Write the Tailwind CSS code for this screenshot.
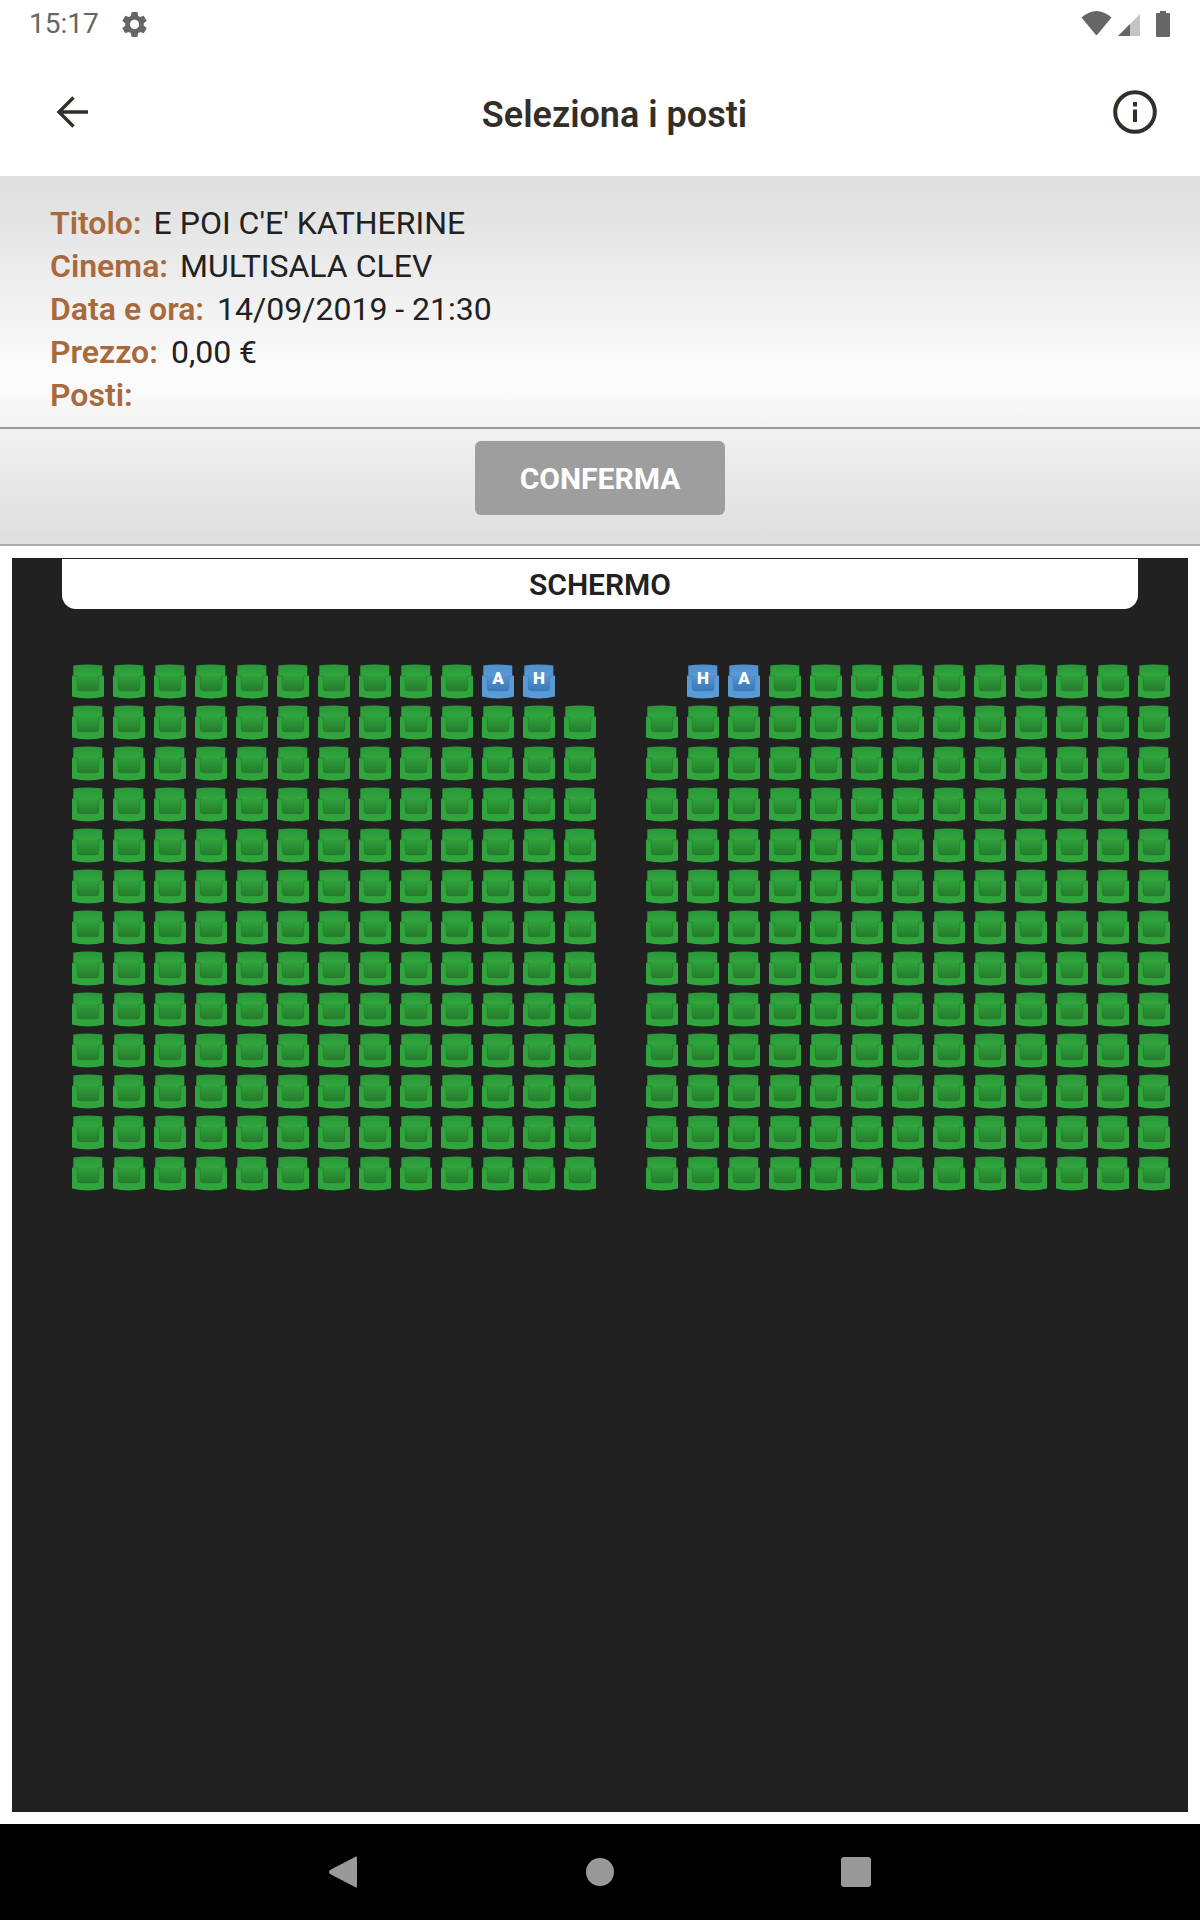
<!DOCTYPE html>
<html lang="it">
<head>
<meta charset="utf-8">
<title>Seleziona i posti</title>
<script src="https://cdn.jsdelivr.net/npm/@tailwindcss/browser@4"></script>
</head>
<body class="w-[1200px] h-[1920px] flex flex-col bg-white font-[Roboto,sans-serif] overflow-hidden">

<!-- seat shapes -->
<svg class="absolute w-0 h-0">
  <defs>
    <linearGradient id="greenBack" x1="0" y1="0" x2="0" y2="1"><stop offset="0" stop-color="#2a9638"/><stop offset="1" stop-color="#31a73e"/></linearGradient>
    <linearGradient id="greenInner" x1="0" y1="0" x2="0" y2="1"><stop offset="0" stop-color="#2fa13b"/><stop offset="1" stop-color="#257b2c"/></linearGradient>
    <linearGradient id="blueBack" x1="0" y1="0" x2="0" y2="1"><stop offset="0" stop-color="#4f8fcc"/><stop offset="1" stop-color="#5a9bd6"/></linearGradient>
    <linearGradient id="blueInner" x1="0" y1="0" x2="0" y2="1"><stop offset="0" stop-color="#5594d0"/><stop offset="1" stop-color="#3878b8"/></linearGradient>
    <symbol id="seat-green" viewBox="0 0 32 35">
      <path d="M1.3 1.6Q15.7-0.8 30.3 1.6V13H1.3Z" fill="url(#greenBack)"/>
      <path d="M0 11.7H5V12H27V11.7H32V32.6Q16 36.6 0 32.6Z" fill="#30a53d"/>
      <path d="M5 12H27V24Q27 27 24 27H8Q5 27 5 24Z" fill="url(#greenInner)"/>
      <path d="M0.3 11.9H5.3V24Q5.3 26.7 8 26.7H24Q26.7 26.7 26.7 24V11.9H31.7" fill="none" stroke="#267f2e" stroke-width="0.6"/>
    </symbol>
    <symbol id="seat-blue" viewBox="0 0 32 35">
      <path d="M1.3 1.6Q15.7-0.8 30.3 1.6V13H1.3Z" fill="url(#blueBack)"/>
      <path d="M0 11.7H5V12H27V11.7H32V32.6Q16 36.6 0 32.6Z" fill="#5a9bd6"/>
      <path d="M5 12H27V24Q27 27 24 27H8Q5 27 5 24Z" fill="url(#blueInner)"/>
      <path d="M0.3 11.9H5.3V24Q5.3 26.7 8 26.7H24Q26.7 26.7 26.7 24V11.9H31.7" fill="none" stroke="#3f80c0" stroke-width="0.6"/>
    </symbol>
  </defs>
</svg>

<!-- status bar -->
<div class="h-[48px] flex items-center justify-between pl-[29px] pr-[30px] text-[#666666]">
  <div class="flex items-center gap-[20px]">
    <span class="text-[28px] leading-none">15:17</span>
    <svg class="w-[31px] h-[31px]" viewBox="0 0 24 24" fill="#666666"><path d="M19.14 12.94c.04-.3.06-.61.06-.94 0-.32-.02-.64-.07-.94l2.03-1.58c.18-.14.23-.41.12-.61l-1.92-3.32c-.12-.22-.37-.29-.59-.22l-2.39.96c-.5-.38-1.03-.7-1.62-.94l-.36-2.54c-.04-.24-.24-.41-.48-.41h-3.84c-.24 0-.43.17-.47.41l-.36 2.54c-.59.24-1.13.57-1.62.94l-2.39-.96c-.22-.08-.47 0-.59.22L2.74 8.87c-.12.21-.08.47.12.61l2.03 1.58c-.05.3-.09.63-.09.94s.02.64.07.94l-2.03 1.58c-.18.14-.23.41-.12.61l1.92 3.32c.12.22.37.29.59.22l2.39-.96c.5.38 1.03.7 1.62.94l.36 2.54c.05.24.24.41.48.41h3.84c.24 0 .44-.17.47-.41l.36-2.54c.59-.24 1.13-.56 1.62-.94l2.39.96c.22.08.47 0 .59-.22l1.92-3.32c.12-.22.07-.47-.12-.61l-2.01-1.58zM12 15.6c-1.98 0-3.6-1.62-3.6-3.6s1.62-3.6 3.6-3.6 3.6 1.62 3.6 3.6-1.62 3.6-3.6 3.6z"/></svg>
  </div>
  <div class="flex items-center">
    <svg class="w-[31px] h-[24px] mb-[2px]" viewBox="0 0 31 24"><path d="M0.5 6.5Q15.5-6.5 30.5 6.5L16.5 23.4Q15.5 24.4 14.5 23.4Z" fill="#666666"/></svg>
    <svg class="w-[22px] h-[22px] ml-[6px] mt-[2px]" viewBox="0 0 22 22"><path d="M0 22L22 0V22Z" fill="#c4c4c4"/><path d="M0 22L12 10V22Z" fill="#666666"/></svg>
    <svg class="w-[14px] h-[26px] ml-[16px]" viewBox="0 0 14 26"><path d="M4 0H10V2H13Q14 2 14 3V25Q14 26 13 26H1Q0 26 0 25V3Q0 2 1 2H4Z" fill="#666666"/></svg>
  </div>
</div>

<!-- toolbar -->
<div class="h-[128px] relative flex items-center justify-between pl-[56px] pr-[43px] text-[#332e28]">
  <svg class="w-[32px] h-[32px]" viewBox="0 0 32 32" fill="none" stroke="#332e28" stroke-width="3.4"><path d="M32 16H3M17.5 1.5L3 16L17.5 30.5"/></svg>
  <h1 class="text-[36px] font-semibold leading-none ml-[28px] mt-[5px]">Seleziona i posti</h1>
  <svg class="w-[44px] h-[44px]" viewBox="0 0 44 44" fill="none"><circle cx="22" cy="22" r="19.8" stroke="#332e28" stroke-width="4"/><rect x="20" y="19.5" width="4" height="12.5" fill="#332e28"/><rect x="20" y="12" width="4" height="4.5" fill="#332e28"/></svg>
</div>

<!-- film info -->
<div class="h-[253px] pt-[26px] pl-[50px] bg-linear-to-b from-[#dedede] via-[#fcfcfc] via-80% to-[#f3f3f3] border-b-2 border-[#999999] text-[32px] leading-[43px] text-[#212121]">
  <div class="flex gap-[12px]"><span class="font-semibold text-[#a8693c]">Titolo:</span><span>E POI C'E' KATHERINE</span></div>
  <div class="flex gap-[12px]"><span class="font-semibold text-[#a8693c]">Cinema:</span><span>MULTISALA CLEV</span></div>
  <div class="flex gap-[13px]"><span class="font-semibold text-[#a8693c]">Data e ora:</span><span>14/09/2019 - 21:30</span></div>
  <div class="flex gap-[13px]"><span class="font-semibold text-[#a8693c]">Prezzo:</span><span>0,00 €</span></div>
  <div class="flex gap-[13px]"><span class="font-semibold text-[#a8693c]">Posti:</span></div>
</div>

<!-- confirm -->
<div class="h-[117px] pt-[12px] flex items-start justify-center bg-linear-to-b from-[#f1f1f1] to-[#dedede] border-b-2 border-[#aaaaaa]">
  <button class="w-[250px] h-[74px] rounded-[6px] bg-[#9e9e9e] text-white text-[30px] font-bold">CONFERMA</button>
</div>

<!-- seat map -->
<div class="mt-[12px] mx-[12px] h-[1254px] bg-[#212121] pt-px">
  <div class="mx-[50px] h-[50px] flex items-center justify-center bg-white rounded-b-[14px] text-[30px] font-semibold text-[#212121]">SCHERMO</div>
  <div class="mt-[55px] pl-[60px] flex gap-[50px]">
    <div id="left" class="grid grid-cols-[repeat(13,32px)] auto-rows-[35px] gap-x-[9px] gap-y-[6px]"></div>
    <div id="right" class="grid grid-cols-[repeat(13,32px)] auto-rows-[35px] gap-x-[9px] gap-y-[6px]"></div>
  </div>
</div>

<!-- nav bar -->
<div class="mt-[12px] h-[96px] pr-px bg-black flex items-center justify-center">
  <svg class="w-[29px] h-[32px]" viewBox="0 0 29 32"><path d="M28 0.5Q29 0 29 2V30Q29 32 28 31.5L2 18Q0 16 2 14Z" fill="#999999"/></svg>
  <div class="w-[28px] h-[28px] rounded-full bg-[#999999] ml-[229px]"></div>
  <div class="w-[30px] h-[30px] rounded-[3px] bg-[#999999] ml-[227px]"></div>
</div>

<script>
  const rows = 13;
  const cols = 13;

  function seat(type, letter) {
    const el = document.createElement("div");
    el.className = "relative";
    let html = '<svg class="block w-[32px] h-[35px]"><use href="#seat-' + type + '"/></svg>';
    if (letter) {
      html += '<span class="absolute inset-x-0 top-[4px] text-center text-[17px] leading-[20px] font-black text-white">' + letter + '</span>';
    }
    el.innerHTML = html;
    return el;
  }

  // first row has a few odd seats
  const leftFirst = { 10: "A", 11: "H" };
  const rightFirst = { 1: "H", 2: "A" };

  function fill(id, first, skip) {
    const box = document.getElementById(id);
    for (let r = 0; r < rows; r++) {
      for (let c = 0; c < cols; c++) {
        if (r === 0 && c === skip) {
          box.appendChild(document.createElement("div"));
        } else if (r === 0 && first[c]) {
          box.appendChild(seat("blue", first[c]));
        } else {
          box.appendChild(seat("green"));
        }
      }
    }
  }

  fill("left", leftFirst, 12);
  fill("right", rightFirst, 0);
</script>
</body>
</html>
